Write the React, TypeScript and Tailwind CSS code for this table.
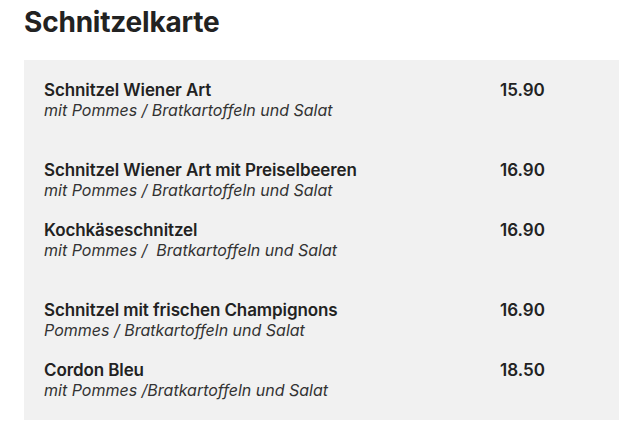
import React from "react";

const items = [
  { name: "Schnitzel Wiener Art", sub: "mit Pommes / Bratkartoffeln und Salat", price: "15.90", gap: "mb-10" },
  { name: "Schnitzel Wiener Art mit Preiselbeeren", sub: "mit Pommes / Bratkartoffeln und Salat", price: "16.90", gap: "mb-5" },
  { name: "Kochkäseschnitzel", sub: "mit Pommes /\u00a0 Bratkartoffeln und Salat", price: "16.90", gap: "mb-10" },
  { name: "Schnitzel mit frischen Champignons", sub: "Pommes / Bratkartoffeln und Salat", price: "16.90", gap: "mb-5" },
  { name: "Cordon Bleu", sub: "mit Pommes /Bratkartoffeln und Salat", price: "18.50", gap: "" },
];

export default function App() {
  return (
    <div className="w-[619px] h-[434px] bg-white overflow-hidden text-[#222]" style={{ fontFamily: "Inter, 'Noto Sans', sans-serif" }}>
      <h1 className="pl-6 pt-[5px] h-[60px] text-[28px] leading-[34px] font-bold tracking-[-0.2px]">Schnitzelkarte</h1>
      <div className="ml-6 bg-[#f1f1f1] px-5 py-5 h-[360px]">
        {items.map((it) => (
          <div key={it.name} className={`grid grid-cols-[456px_1fr] ${it.gap}`}>
            <div>
              <div className="text-[17px] leading-5 font-semibold tracking-[-0.1px]">{it.name}</div>
              <div className="text-[16px] leading-5 italic text-[#333]">{it.sub}</div>
            </div>
            <div className="text-[17px] leading-5 font-semibold">{it.price}</div>
          </div>
        ))}
      </div>
    </div>
  );
}
